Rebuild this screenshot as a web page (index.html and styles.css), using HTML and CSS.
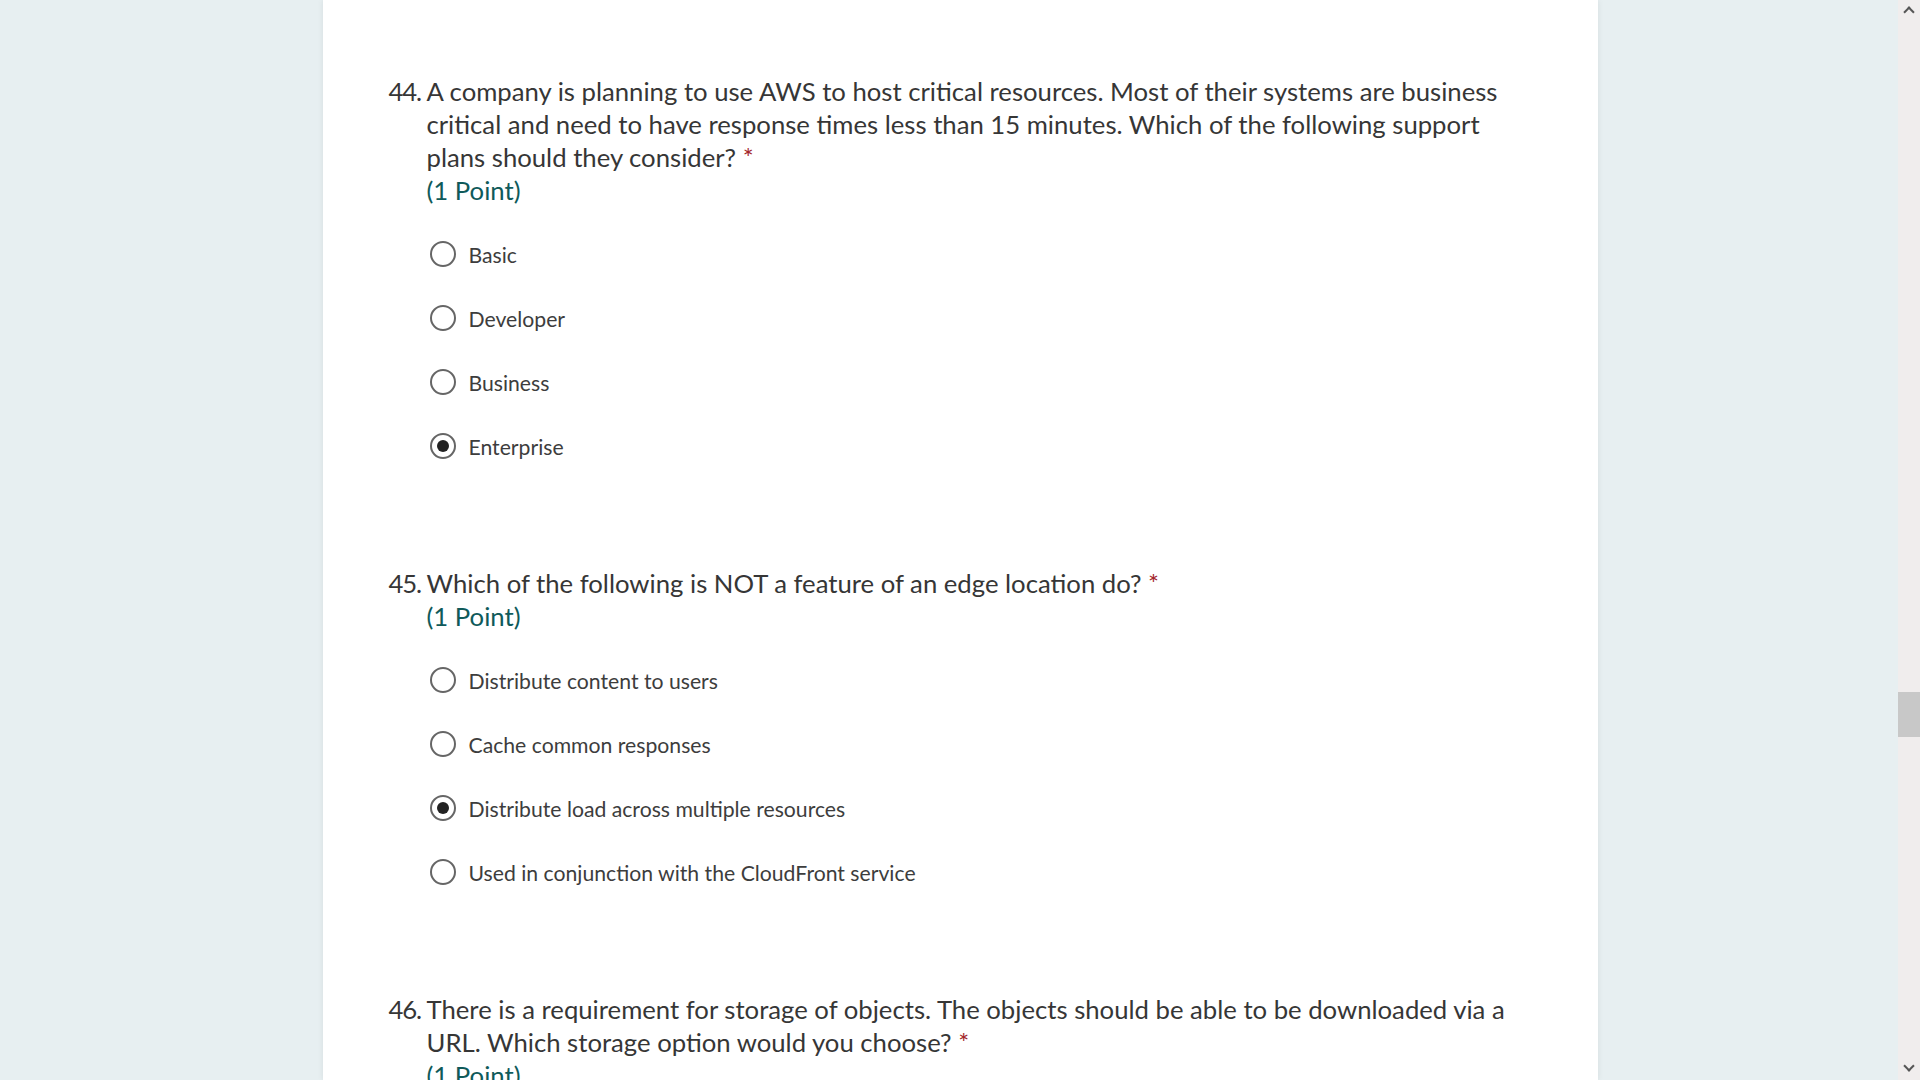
FILE: index.html
```html
<!DOCTYPE html>
<html lang="en">
<head>
<meta charset="utf-8">
<title>Quiz</title>
<link rel="stylesheet" href="styles.css">
</head>
<body>
<main class="page">
  <section class="card">
    <div class="question">
      <div class="q-head">
        <span class="q-num">44.</span>
        <div class="q-body">
          <div class="q-title">A company is planning to use AWS to host critical resources. Most of their systems are business<br>critical and need to have response times less than 15 minutes. Which of the following support<br>plans should they consider? <span class="req">*</span></div>
          <div class="q-points">(1 Point)</div>
        </div>
      </div>
      <ul class="options">
        <li class="option"><span class="radio"></span><span class="label">Basic</span></li>
        <li class="option"><span class="radio"></span><span class="label">Developer</span></li>
        <li class="option"><span class="radio"></span><span class="label">Business</span></li>
        <li class="option"><span class="radio checked"></span><span class="label">Enterprise</span></li>
      </ul>
    </div>

    <div class="question">
      <div class="q-head">
        <span class="q-num">45.</span>
        <div class="q-body">
          <div class="q-title">Which of the following is NOT a feature of an edge location do? <span class="req">*</span></div>
          <div class="q-points">(1 Point)</div>
        </div>
      </div>
      <ul class="options">
        <li class="option"><span class="radio"></span><span class="label">Distribute content to users</span></li>
        <li class="option"><span class="radio"></span><span class="label">Cache common responses</span></li>
        <li class="option"><span class="radio checked"></span><span class="label">Distribute load across multiple resources</span></li>
        <li class="option"><span class="radio"></span><span class="label">Used in conjunction with the CloudFront service</span></li>
      </ul>
    </div>

    <div class="question">
      <div class="q-head">
        <span class="q-num">46.</span>
        <div class="q-body">
          <div class="q-title">There is a requirement for storage of objects. The objects should be able to be downloaded via a<br>URL. Which storage option would you choose? <span class="req">*</span></div>
          <div class="q-points">(1 Point)</div>
        </div>
      </div>
    </div>
  </section>
</main>
<aside class="scrollbar">
  <span class="arrow up"></span>
  <span class="thumb"></span>
  <span class="arrow down"></span>
</aside>
</body>
</html>
```
FILE: styles.css
```css
html, body {
  margin: 0;
  padding: 0;
  height: 1080px;
  overflow: hidden;
}
body {
  background: #e7eff1;
  font-family: "Lato", "Open Sans", "Liberation Sans", sans-serif;
  color: #363636;
}
.page {
  height: 1080px;
}
.card {
  width: 1275px;
  margin: 0 auto;
  height: 1080px;
  background: #ffffff;
  box-shadow: 0 0 6px rgba(0, 0, 0, 0.08);
  padding: 75px 0 0 66px;
  box-sizing: border-box;
}
.question {
  margin-bottom: 88px;
}
.q-head {
  display: flex;
  align-items: flex-start;
}
.q-num {
  width: 38px;
  flex: none;
  font-size: 25.7px;
  line-height: 33px;
  letter-spacing: -1.2px;
}
.q-body {
  flex: 1;
}
.q-title {
  font-size: 25.7px;
  line-height: 33px;
  white-space: nowrap;
}
.req {
  color: #a4262c;
}
.q-points {
  font-size: 25.7px;
  line-height: 33px;
  color: #0f5a5a;
}
.options {
  list-style: none;
  margin: 16px 0 0 41px;
  padding: 0;
}
.option {
  height: 64px;
  display: flex;
  align-items: center;
  gap: 13px;
}
.radio {
  width: 26px;
  height: 26px;
  box-sizing: border-box;
  border: 2px solid #666666;
  border-radius: 50%;
  flex: none;
  display: flex;
  align-items: center;
  justify-content: center;
  position: relative;
  top: -1px;
}
.radio.checked::after {
  content: "";
  width: 12px;
  height: 12px;
  border-radius: 50%;
  background: #222222;
}
.label {
  font-size: 21.2px;
  color: #3d3d3d;
}
.scrollbar {
  position: fixed;
  top: 0;
  right: 0;
  width: 22px;
  height: 1080px;
  background: #f0eded;
  display: flex;
  flex-direction: column;
  align-items: center;
}
.arrow {
  width: 6px;
  height: 6px;
  border-left: 2px solid #555;
  border-top: 2px solid #555;
}
.arrow.up {
  transform: rotate(45deg);
  margin-top: 8px;
}
.arrow.down {
  transform: rotate(225deg);
  margin-top: auto;
  margin-bottom: 10px;
}
.thumb {
  width: 22px;
  height: 45px;
  background: #c8c8c8;
  margin-top: 676px;
}
```
